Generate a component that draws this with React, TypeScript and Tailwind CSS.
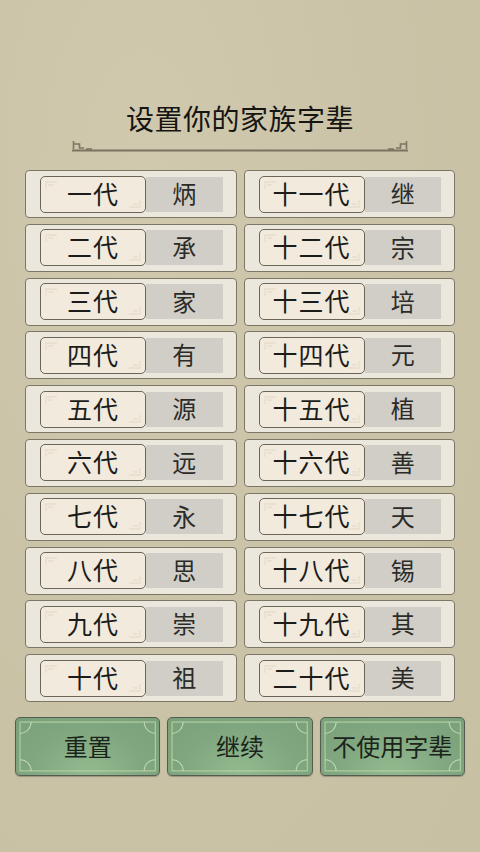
const names = [
  ["一代", "炳"],
  ["二代", "承"],
  ["三代", "家"],
  ["四代", "有"],
  ["五代", "源"],
  ["六代", "远"],
  ["七代", "永"],
  ["八代", "思"],
  ["九代", "崇"],
  ["十代", "祖"],
];

const names2 = [
  ["十一代", "继"],
  ["十二代", "宗"],
  ["十三代", "培"],
  ["十四代", "元"],
  ["十五代", "植"],
  ["十六代", "善"],
  ["十七代", "天"],
  ["十八代", "锡"],
  ["十九代", "其"],
  ["二十代", "美"],
];

const font = { fontFamily: '"Noto Sans CJK SC", "Noto Sans", sans-serif' };

function Row({ label, value }: { label: string; value: string }) {
  return (
    <div className="h-[48px] rounded-[4px] border border-[#7b7666] bg-[#ebe7dc] flex items-center pl-[14px] pr-[13px]">
      <div className="relative h-[37px] w-[106px] shrink-0 rounded-[5px] border border-[#6b6557] bg-[#f2eadc] flex items-center justify-center">
        {/* corner ornaments */}
        <svg className="absolute inset-0" width="104" height="35" viewBox="0 0 104 35">
          <path d="M5 12 V5 H16 M8 9 V8 H12" fill="none" stroke="#e6ddcb" strokeWidth="1.3" />
          <path d="M99 23 V30 H88 M96 26 V27 H92" fill="none" stroke="#e6ddcb" strokeWidth="1.3" />
        </svg>
        <span className="relative -mt-[2px] text-[25px] leading-none text-[#1c1c1a] tracking-[1px]">{label}</span>
      </div>
      <div className="h-[35px] flex-1 bg-[#d1cec7] flex items-center justify-center">
        <span className="-mt-[2px] text-[24px] leading-none text-[#2b2b28]">{value}</span>
      </div>
    </div>
  );
}

function GreenButton({ text }: { text: string }) {
  return (
    <button className="relative h-[59px] rounded-[5px] border-[1.5px] border-[#555c50] bg-[radial-gradient(ellipse_at_50%_100%,#93ba8f_0%,#80a77f_55%,#7aa079_100%)] flex items-center justify-center shadow-[0_1px_1px_rgba(0,0,0,0.25)]">
      <svg className="absolute inset-0 w-full h-full" viewBox="0 0 142 56" preserveAspectRatio="none">
        <rect x="4" y="4" width="134" height="48" fill="none" stroke="#b9d4a8" strokeWidth="1" />
        <path d="M4 15 A11 11 0 0 0 15 4" fill="none" stroke="#c5dcb2" strokeWidth="1" />
        <path d="M127 4 A11 11 0 0 0 138 15" fill="none" stroke="#c5dcb2" strokeWidth="1" />
        <path d="M4 41 A11 11 0 0 1 15 52" fill="none" stroke="#c5dcb2" strokeWidth="1" />
        <path d="M127 52 A11 11 0 0 1 138 41" fill="none" stroke="#c5dcb2" strokeWidth="1" />
      </svg>
      <span className="relative -mt-[2px] text-[24px] leading-none text-[#1b241a] whitespace-nowrap">{text}</span>
    </button>
  );
}

export default function App() {
  return (
    <div
      className="w-[480px] h-[852px] overflow-hidden bg-[#ccc4a8] bg-[radial-gradient(ellipse_at_30%_20%,#d0c9ae_0%,#cbc3a7_50%,#c8c0a3_100%)] flex flex-col"
      style={font}
    >
      {/* Title */}
      <h1 className="pt-[100px] h-[136px] text-center text-[28px] leading-[36px] text-[#151513] tracking-[0.5px]">
        设置你的家族字辈
      </h1>

      {/* Ornament line */}
      <div className="mt-[3px] px-[72px] h-[13px]">
        <svg width="336" height="13" viewBox="0 0 336 13">
          <path d="M1.5 2 V10 M1.5 5 H7.5 V9 H12" fill="none" stroke="#7d7662" strokeWidth="1.6" />
          <path d="M14 10 H20" stroke="#7d7662" strokeWidth="1.6" />
          <path d="M334.5 2 V10 M334.5 5 H328.5 V9 H324" fill="none" stroke="#7d7662" strokeWidth="1.6" />
          <path d="M322 10 H316" stroke="#7d7662" strokeWidth="1.6" />
          <path d="M0 11.5 H336" stroke="#7a735f" strokeWidth="2" />
        </svg>
      </div>

      {/* Generation list */}
      <div className="mt-[18px] px-[25px] grid grid-cols-2 gap-x-[7px]">
        <div className="flex flex-col gap-[5.8px]">
          {names.map(([l, v]) => (
            <Row key={l} label={l} value={v} />
          ))}
        </div>
        <div className="flex flex-col gap-[5.8px]">
          {names2.map(([l, v]) => (
            <Row key={l} label={l} value={v} />
          ))}
        </div>
      </div>

      {/* Actions */}
      <div className="mt-[15px] px-[15px] grid grid-cols-3 gap-[7px]">
        <GreenButton text="重置" />
        <GreenButton text="继续" />
        <GreenButton text="不使用字辈" />
      </div>
    </div>
  );
}
